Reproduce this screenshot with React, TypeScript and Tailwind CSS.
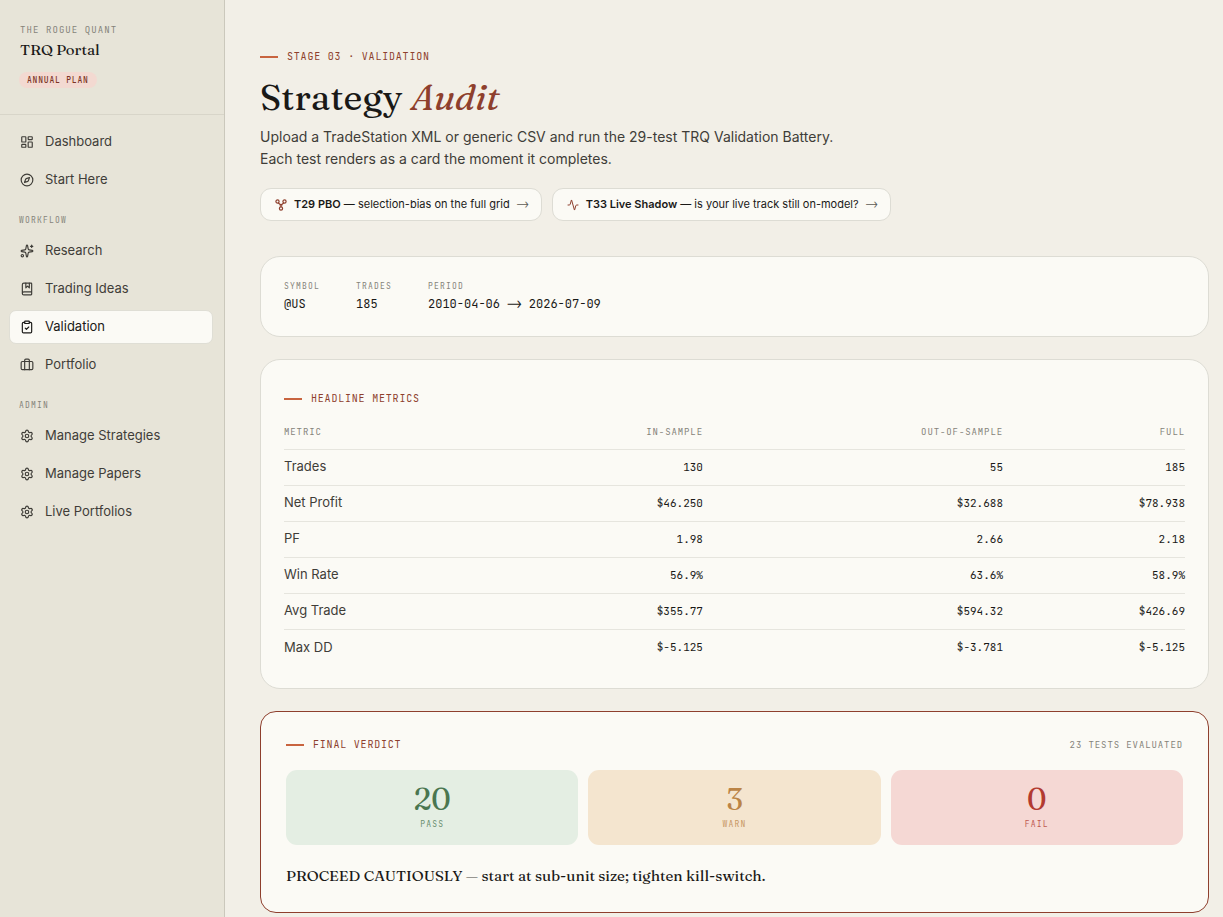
import type { ReactNode } from "react"
import {
  Activity,
  BookMarked,
  Briefcase,
  ClipboardCheck,
  Compass,
  LayoutDashboard,
  Settings,
  Sparkles,
  type LucideIcon,
} from "lucide-react"

type NavItem = { label: string; icon: LucideIcon; active?: boolean }

function ForkIcon({ className }: { className?: string }) {
  return (
    <svg viewBox="0 0 24 24" fill="none" stroke="currentColor" strokeWidth="2.4" className={className}>
      <circle cx="5" cy="5" r="3.2" />
      <circle cx="19" cy="5" r="3.2" />
      <circle cx="12" cy="19" r="3.2" />
      <path d="M6.5 8 12 12l5.500-4M12 11v5M9 12h6" />
    </svg>
  )
}

const groups: { title?: string; items: NavItem[] }[] = [
  {
    items: [
      { label: "Dashboard", icon: LayoutDashboard },
      { label: "Start Here", icon: Compass },
    ],
  },
  {
    title: "Workflow",
    items: [
      { label: "Research", icon: Sparkles },
      { label: "Trading Ideas", icon: BookMarked },
      { label: "Validation", icon: ClipboardCheck, active: true },
      { label: "Portfolio", icon: Briefcase },
    ],
  },
  {
    title: "Admin",
    items: [
      { label: "Manage Strategies", icon: Settings },
      { label: "Manage Papers", icon: Settings },
      { label: "Live Portfolios", icon: Settings },
    ],
  },
]

const summary = [
  { label: "Symbol", value: "@US" },
  { label: "Trades", value: "185" },
  { label: "Period", value: "2010-04-06 ⟶ 2026-07-09" },
]

const metrics = [
  ["Trades", "130", "55", "185"],
  ["Net Profit", "$46.250", "$32.688", "$78.938"],
  ["PF", "1.98", "2.66", "2.18"],
  ["Win Rate", "56.9%", "63.6%", "58.9%"],
  ["Avg Trade", "$355.77", "$594.32", "$426.69"],
  ["Max DD", "$-5.125", "$-3.781", "$-5.125"],
]

const verdicts = [
  { count: 20, label: "Pass", tone: "bg-[#e4eee3] text-[#4a7650]" },
  { count: 3, label: "Warn", tone: "bg-[#f4e5cf] text-[#bb8446]" },
  { count: 0, label: "Fail", tone: "bg-[#f5d8d4] text-[#b23a30]" },
]

const mono = "font-['JetBrains_Mono','Liberation_Mono',monospace]"
const serif = "font-['Fraunces','Liberation_Serif',serif]"

function Eyebrow({ children }: { children: ReactNode }) {
  return (
    <div className="flex items-center gap-[9px]">
      <span className="h-[2px] w-[18px] bg-[#c8643f]" />
      <span className={`${mono} text-[10px] leading-4 tracking-[0.08em] text-[#8e3f2d] uppercase`}>{children}</span>
    </div>
  )
}

function Sidebar() {
  return (
    <aside className="w-[225px] shrink-0 border-r border-[#cbc8bc] bg-[#e7e4d8]">
      <div className="border-b border-[#d8d5c9] px-5 pt-6 pb-[25px]">
        <p className={`${mono} text-[9px] leading-3 tracking-[0.12em] text-[#85837a] uppercase`}>The Rogue Quant</p>
        <p className={`${serif} mt-1 text-[15px] leading-5 font-medium text-[#1a1917]`}>TRQ Portal</p>
        <span
          className={`${mono} mt-3 -ml-px inline-block rounded-full bg-[#f3d9d1] px-2 text-[8px] leading-4 font-medium tracking-[0.1em] text-[#7d3526] uppercase`}
        >
          Annual Plan
        </span>
      </div>
      <nav className="pt-[10px] pr-[11px] pl-[9px]">
        {groups.map((group, i) => (
          <div key={i}>
            {group.title && (
              <p className={`${mono} mt-[17px] mb-[7px] pl-[10px] text-[8px] leading-[13px] tracking-[0.15em] text-[#85837a] uppercase`}>
                {group.title}
              </p>
            )}
            <div className="flex flex-col gap-1">
              {group.items.map(({ label, icon: Icon, active }) => (
                <a
                  key={label}
                  href="#"
                  className={
                    active
                      ? "flex h-[34px] items-center gap-[11px] rounded-[7px] border border-[#dfded5] bg-[#fbfaf5] px-[10px] text-[13px] text-[#1a1917]"
                      : "flex h-[34px] items-center gap-[11px] rounded-[7px] border border-transparent px-[10px] text-[13px] text-[#3f3d38]"
                  }
                >
                  <Icon className="size-[14px]" strokeWidth={2} />
                  {label}
                </a>
              ))}
            </div>
          </div>
        ))}
      </nav>
    </aside>
  )
}

function ToolLink({ icon, name, text }: { icon: ReactNode; name: string; text: string }) {
  return (
    <a
      href="#"
      className="flex h-[33px] items-center gap-[7px] rounded-[11px] border border-[#dddcd4] bg-[#fbfaf5] pr-3 pl-[14px] text-[11px] text-[#1a1917]"
    >
      <span className="text-[#8e3f2d]">{icon}</span>
      <span>
        <strong className="font-semibold">{name}</strong> — {text}
      </span>
      <span className={`${mono} text-[10px] text-[#5d5b54]`}>⟶</span>
    </a>
  )
}

export default function App() {
  return (
    <div className="flex min-h-screen bg-[#f2efe7] font-['Inter',sans-serif] text-[#1a1917]">
      <Sidebar />
      <main className="min-w-0 flex-1 pt-[49px] pr-[14px] pb-1 pl-[35px]">
        <header>
          <Eyebrow>Stage 03 · Validation</Eyebrow>
          <h1 className={`${serif} mt-3 text-[36px] leading-10 font-medium text-[#1a1917]`}>
            Strategy <em className="text-[#8e3f2d]">Audit</em>
          </h1>
          <p className="mt-[9px] max-w-[600px] text-[14px] leading-[22px] text-[#3f3d38]">
            Upload a TradeStation XML or generic CSV and run the 29-test TRQ Validation Battery. Each test renders as a card the
            moment it completes.
          </p>
          <div className="mt-[18px] flex flex-wrap gap-[10px]">
            <ToolLink icon={<ForkIcon className="size-3" />} name="T29 PBO" text="selection-bias on the full grid" />
            <ToolLink
              icon={<Activity className="size-3" />}
              name="T33 Live Shadow"
              text="is your live track still on-model?"
            />
          </div>
        </header>

        <section className="mt-[35px] flex gap-9 rounded-[20px] border border-[#dddcd4] bg-[#fbfaf5] px-[23px] pt-[22px] pb-[23px]">
          {summary.map((s) => (
            <div key={s.label} className={mono}>
              <p className="text-[8px] leading-[14px] tracking-[0.15em] text-[#85837a] uppercase">{s.label}</p>
              <p className="mt-[2px] text-[12px] leading-[18px]">{s.value}</p>
            </div>
          ))}
        </section>

        <section className="mt-[22px] rounded-[20px] border border-[#dddcd4] bg-[#fbfaf5] px-[23px] pt-[31px] pb-[23px]">
          <Eyebrow>Headline Metrics</Eyebrow>
          <table className="mt-[10px] w-full table-fixed border-collapse">
            <thead>
              <tr className={`${mono} h-8 border-b border-[#e6e5de] text-right text-[9px] tracking-[0.1em] text-[#85837a] uppercase`}>
                <th className="w-[25%] text-left font-normal">Metric</th>
                <th className="w-[21.5%] font-normal">In-Sample</th>
                <th className="w-[33.3%] font-normal">Out-of-Sample</th>
                <th className="font-normal">Full</th>
              </tr>
            </thead>
            <tbody>
              {metrics.map(([name, ...values]) => (
                <tr key={name} className="h-9 border-b border-[#e6e5de] last:border-0">
                  <td className="text-[13px] text-[#3f3d38]">{name}</td>
                  {values.map((v, i) => (
                    <td key={i} className={`${mono} text-right text-[11px]`}>
                      {v}
                    </td>
                  ))}
                </tr>
              ))}
            </tbody>
          </table>
        </section>

        <section className="mt-[22px] rounded-[16px] border border-[#8e3f2d] bg-[#fbfaf5] px-[25px] pt-[25px] pb-[25px]">
          <div className="flex items-center justify-between">
            <Eyebrow>Final Verdict</Eyebrow>
            <span className={`${mono} text-[9px] leading-4 tracking-[0.1em] text-[#85837a] uppercase`}>23 tests evaluated</span>
          </div>
          <div className="mt-[17px] grid grid-cols-3 gap-[10px]">
            {verdicts.map((v) => (
              <div key={v.label} className={`flex h-[75px] flex-col items-center rounded-[11px] pt-[14px] ${v.tone}`}>
                <span className={`${serif} text-[30px] leading-8 font-medium`}>{v.count}</span>
                <span className={`${mono} mt-[2px] text-[8px] leading-3 tracking-[0.15em] uppercase opacity-80`}>{v.label}</span>
              </div>
            ))}
          </div>
          <p className={`${serif} mt-5 text-[15px] leading-[22px]`}>
            PROCEED CAUTIOUSLY <span className="text-[#85837a]">—</span> start at sub-unit size; tighten kill-switch.
          </p>
        </section>
      </main>
    </div>
  )
}
